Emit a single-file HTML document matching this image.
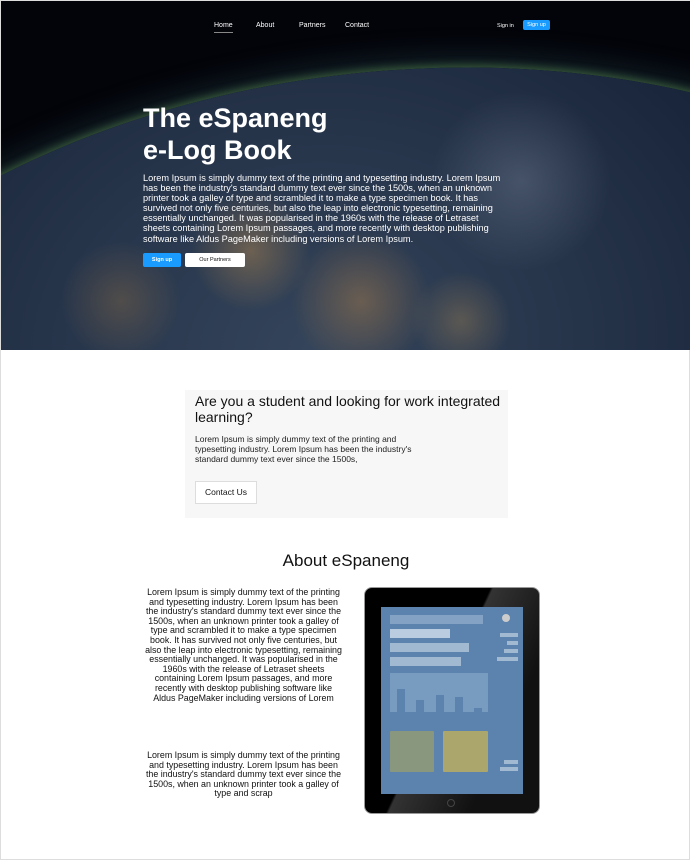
<!DOCTYPE html>
<html><head><style>
*{margin:0;padding:0;box-sizing:border-box}
body{width:690px;height:860px;background:#fff;font-family:"Liberation Sans",sans-serif;position:relative;overflow:hidden;border:1px solid #ddd}
.hero{position:absolute;left:0;top:0;width:690px;height:349px;overflow:hidden;background:#03040a}
.earth{position:absolute;left:-300px;top:70px;width:1400px;height:900px;border-radius:50%;transform:rotate(-6deg);
background:radial-gradient(ellipse at 45% 30%,#34445a 0%,#26344a 25%,#18243a 45%,#0f1828 70%);
box-shadow:0 -3px 8px rgba(90,140,80,.5),0 -10px 30px rgba(60,110,120,.3)}
.lights{position:absolute;left:0;top:0;width:690px;height:349px;
background:radial-gradient(circle at 250px 250px,rgba(255,180,80,.3),transparent 60px),
radial-gradient(circle at 360px 300px,rgba(255,170,70,.28),transparent 70px),
radial-gradient(circle at 520px 180px,rgba(200,210,230,.2),transparent 90px),
radial-gradient(circle at 120px 300px,rgba(255,170,60,.18),transparent 60px),
radial-gradient(circle at 460px 320px,rgba(255,190,90,.22),transparent 50px)}
.nav{position:absolute;top:21px;font-size:7px;color:#fff}
.nav span{position:absolute;white-space:nowrap}
h1{position:absolute;left:142px;top:101px;color:#fff;font-size:27px;line-height:32px;font-weight:bold}
.hp{position:absolute;left:142px;top:172px;width:364px;color:#fff;font-size:9.2px;line-height:10.1px}
.btn{position:absolute;font-size:5.5px;text-align:center;border-radius:2px}
.card{position:absolute;left:184px;top:389px;width:323px;height:128px;background:#f7f7f7}
.card h2{position:absolute;left:10px;top:3px;font-size:14px;font-weight:normal;line-height:16px;color:#111;width:310px}
.card p{position:absolute;left:10px;top:44px;font-size:8.5px;line-height:10px;color:#222;width:235px}
.card .c{position:absolute;left:10px;top:91px;width:62px;height:23px;background:#fff;border:1px solid #ddd;font-size:8.5px;line-height:21px;text-align:center;color:#111}
h3{position:absolute;left:0;width:690px;top:550px;text-align:center;font-size:17px;font-weight:normal;color:#111}
.ap{position:absolute;left:142px;width:201px;text-align:center;font-size:8.9px;line-height:9.6px;color:#111;overflow:hidden}
.tab{position:absolute;left:363px;top:586px;width:176px;height:227px;border-radius:8px;background:linear-gradient(115deg,#000 45%,#333 46%,#111 75%);border:1px solid #999}
.scr{position:absolute;left:380px;top:606px;width:142px;height:187px;background:#5b83ae}
.r{position:absolute;background:rgba(220,230,240,.55)}
</style></head><body>
<div class="hero"><div class="earth"></div><div class="lights"></div>
<div class="nav" style="left:0;width:690px">
<span style="left:213px">Home</span>
<div style="position:absolute;left:213px;top:10px;width:19px;height:1px;background:#888"></div>
<span style="left:255px">About</span><span style="left:298px">Partners</span><span style="left:344px">Contact</span>
<span style="left:496px;font-size:5.5px;top:1px">Sign in</span>
</div>
<div class="btn" style="left:522px;top:19px;width:27px;height:10px;background:#1a9bff;color:#fff;line-height:10px">Sign up</div>
<h1>The eSpaneng<br>e-Log Book</h1>
<div class="hp">Lorem Ipsum is simply dummy text of the printing and typesetting industry. Lorem Ipsum has been the industry's standard dummy text ever since the 1500s, when an unknown printer took a galley of type and scrambled it to make a type specimen book. It has survived not only five centuries, but also the leap into electronic typesetting, remaining essentially unchanged. It was popularised in the 1960s with the release of Letraset sheets containing Lorem Ipsum passages, and more recently with desktop publishing software like Aldus PageMaker including versions of Lorem Ipsum.</div>
<div class="btn" style="left:142px;top:252px;width:38px;height:14px;background:#1a9bff;color:#fff;line-height:14px;font-weight:bold">Sign up</div>
<div class="btn" style="left:184px;top:252px;width:60px;height:14px;background:#fff;color:#111;line-height:14px">Our Partners</div>
</div>
<div class="card"><h2>Are you a student and looking for work integrated learning?</h2>
<p>Lorem Ipsum is simply dummy text of the printing and typesetting industry. Lorem Ipsum has been the industry's standard dummy text ever since the 1500s,</p>
<div class="c">Contact Us</div></div>
<h3>About eSpaneng</h3>
<div class="ap" style="top:587px;height:125px">Lorem Ipsum is simply dummy text of the printing and typesetting industry. Lorem Ipsum has been the industry's standard dummy text ever since the 1500s, when an unknown printer took a galley of type and scrambled it to make a type specimen book. It has survived not only five centuries, but also the leap into electronic typesetting, remaining essentially unchanged. It was popularised in the 1960s with the release of Letraset sheets containing Lorem Ipsum passages, and more recently with desktop publishing software like Aldus PageMaker including versions of Lorem</div>
<div class="ap" style="top:750px;height:48px">Lorem Ipsum is simply dummy text of the printing and typesetting industry. Lorem Ipsum has been the industry's standard dummy text ever since the 1500s, when an unknown printer took a galley of type and scrap</div>
<div class="tab"></div>
<div class="scr">
<div class="r" style="left:9px;top:8px;width:93px;height:9px;background:rgba(180,200,225,.45)"></div>
<div class="r" style="left:9px;top:22px;width:60px;height:9px;background:rgba(225,235,245,.7)"></div>
<div class="r" style="left:9px;top:36px;width:79px;height:9px"></div>
<div class="r" style="left:9px;top:50px;width:71px;height:9px"></div>
<div style="position:absolute;left:121px;top:7px;width:8px;height:8px;border-radius:50%;background:#ccc"></div>
<div class="r" style="left:119px;top:26px;width:18px;height:4px"></div>
<div class="r" style="left:126px;top:34px;width:11px;height:4px"></div>
<div class="r" style="left:123px;top:42px;width:14px;height:4px"></div>
<div class="r" style="left:116px;top:50px;width:21px;height:4px"></div>
<div style="position:absolute;left:9px;top:66px;width:98px;height:39px;background:rgba(150,180,210,.5)"></div>
<div style="position:absolute;left:16px;top:82px;width:8px;height:23px;background:#5b83ae"></div>
<div style="position:absolute;left:35px;top:93px;width:8px;height:12px;background:#5b83ae"></div>
<div style="position:absolute;left:55px;top:88px;width:8px;height:17px;background:#5b83ae"></div>
<div style="position:absolute;left:74px;top:90px;width:8px;height:15px;background:#5b83ae"></div>
<div style="position:absolute;left:93px;top:101px;width:8px;height:4px;background:#5b83ae"></div>
<div style="position:absolute;left:9px;top:124px;width:44px;height:41px;background:#8a977f;border-radius:1px"></div>
<div style="position:absolute;left:62px;top:124px;width:45px;height:41px;background:#aba66c;border-radius:1px"></div>
<div class="r" style="left:123px;top:153px;width:14px;height:4px"></div>
<div class="r" style="left:119px;top:160px;width:18px;height:4px"></div>
</div>
<div style="position:absolute;left:446px;top:798px;width:8px;height:8px;border-radius:50%;border:1px solid #444"></div>
</body></html>
